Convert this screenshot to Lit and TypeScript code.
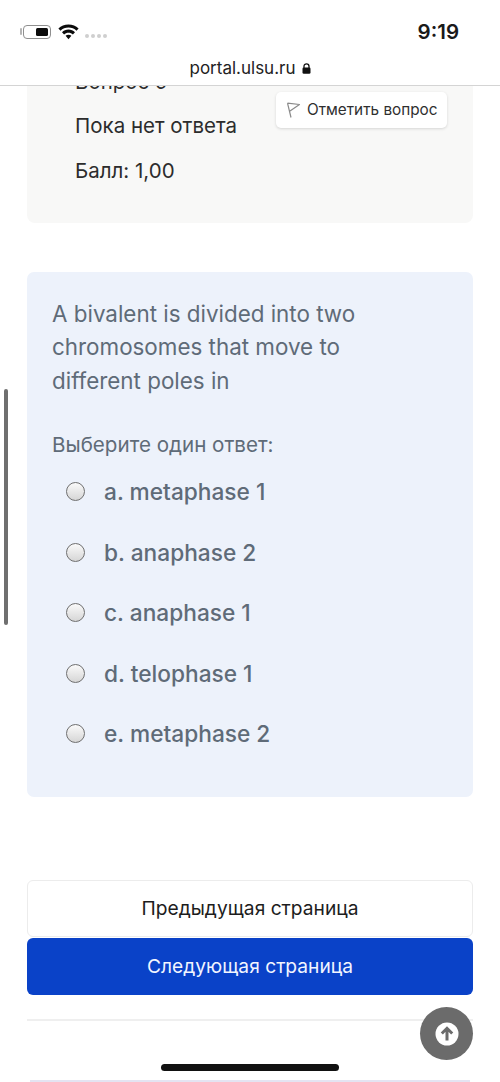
import { LitElement, html, css } from "lit";
import { customElement } from "lit/decorators.js";

const OPTIONS = ["a. metaphase 1", "b. anaphase 2", "c. anaphase 1", "d. telophase 1", "e. metaphase 2"];

@customElement("app-root")
export class AppRoot extends LitElement {
  static styles = css`
    :host { display: block; position: relative; width: 500px; height: 1082px; overflow: hidden; background: #fff; font-family: Inter, "Liberation Sans", sans-serif; }
    .header { position: absolute; inset: 0 0 auto 0; height: 86px; background: #fff; border-bottom: 1px solid #d4d4d4; box-sizing: border-box; z-index: 2; }
    .status { display: flex; align-items: center; padding: 21px 41px 0 20px; height: 21px; }
    .battery { display: flex; align-items: center; gap: 1px; }
    .nub { width: 1.5px; height: 7px; background: #b5b5b5; border-radius: 1px; }
    .cell { width: 28px; height: 14px; border: 1px solid #8f8f8f; border-radius: 4px; box-sizing: border-box; display: flex; justify-content: flex-end; padding: 2px; }
    .cell i { display: block; width: 12px; height: 100%; background: #0c0c0c; border-radius: 1.5px; }
    .wifi { margin-left: 7px; display: block; }
    .dots { display: flex; gap: 2px; margin: 8px 0 0 6px; }
    .dots i { width: 4px; height: 4px; border-radius: 50%; background: #cfcfcf; }
    .time { margin-left: auto; font-size: 20.5px; font-weight: 600; color: #1a1a1a; line-height: 21px; }
    .url { display: flex; justify-content: center; align-items: center; gap: 6px; margin-top: 16px; font-size: 17px; color: #222; line-height: 20px; }
    .page { padding: 62px 27px 0; display: flex; flex-direction: column; }
    .grey { position: relative; height: 161px; background: #f8f8f7; border-radius: 8px; padding: 0 48px; box-sizing: border-box; color: #2c2c2c; font-size: 20.5px; line-height: 24px; }
    .grey p { margin: 0; }
    .grey .q { padding-top: 8px; }
    .grey .s { margin-top: 20px; }
    .grey .m { margin-top: 21px; }
    .flag { position: absolute; left: 249px; top: 30px; width: 171px; height: 36px; background: #fff; border-radius: 5px; box-shadow: 0 1px 3px rgba(0,0,0,.14); display: flex; align-items: center; gap: 6px; padding-left: 10px; box-sizing: border-box; font-size: 15.3px; line-height: 20px; color: #2f2f2f; }
    .blue { margin-top: 49px; height: 525px; background: #edf2fb; border-radius: 7px; padding: 24.5px 25px 0; box-sizing: border-box; color: #5f6b78; }
    .text { font-size: 22.4px; line-height: 33.5px; width: 345px; }
    .prompt { font-size: 20.6px; line-height: 26px; margin-top: 34.5px; }
    .opts { display: flex; flex-direction: column; gap: 34.5px; margin-top: 21px; padding-left: 14px; }
    .opt { display: flex; align-items: center; gap: 19px; height: 26px; font-size: 22.7px; font-weight: 500; color: #5f6b78; }
    .radio { width: 19px; height: 19px; border-radius: 50%; border: 1.5px solid #6f6f6f; box-sizing: border-box; background: linear-gradient(#fafafa, #d6d6d6); flex: none; }
    .btn { height: 57px; display: flex; align-items: center; justify-content: center; border-radius: 6px; box-sizing: border-box; font-size: 19.2px; padding-bottom: 2px; }
    .prev { margin-top: 83px; background: #fff; border: 1px solid #ececec; color: #1d1d1d; }
    .next { margin-top: 1px; background: #0a42c8; color: #f2f5ff; }
    .rule { height: 1.5px; background: #efefef; margin-top: 24px; }
    .bar { position: absolute; left: 4px; top: 389px; width: 4px; height: 236px; background: #6f6f6f; border-radius: 2px; }
    .fab { position: absolute; left: 420px; top: 1007px; width: 53px; height: 53px; border-radius: 50%; background: #6b6b6b; display: flex; align-items: center; justify-content: center; }
    .home { position: absolute; left: 161px; top: 1064px; width: 178px; height: 7px; border-radius: 4px; background: #111; }
    .edge { position: absolute; left: 30px; right: 30px; bottom: 0; height: 2px; background: #e4e4f2; }
  `;

  render() {
    return html`
      <div class="header">
        <div class="status">
          <div class="battery"><span class="nub"></span><div class="cell"><i></i></div></div>
          <svg class="wifi" width="21" height="16" viewBox="0 0 21 16">
            <path d="M10.5 0.5C6.6 0.5 3 2 .4 4.5l2.1 2.2C4.600 4.800 7.400 3.600 10.500 3.600s5.900 1.200 8 3.100l2.100-2.200C18 2 14.400 .5 10.500 .5z" fill="#0c0c0c"/>
            <path d="M10.500 5.600c-2.500 0-4.800 1-6.500 2.600l2.100 2.200c1.200-1.100 2.700-1.700 4.400-1.700s3.200.6 4.400 1.700l2.100-2.200c-1.700-1.600-4-2.600-6.500-2.600z" fill="#0c0c0c"/>
            <path d="M10.500 10.700c-1.100 0-2.100.4-2.900 1.100l2.900 3.400 2.900-3.400c-.8-.7-1.800-1.100-2.900-1.100z" fill="#0c0c0c"/>
          </svg>
          <div class="dots"><i></i><i></i><i></i><i></i></div>
          <div class="time">9:19</div>
        </div>
        <div class="url">
          <span>portal.ulsu.ru</span>
          <svg width="9" height="11" viewBox="0 0 9 11"><path d="M2 5V3.300a2.500 2.500 0 0 1 5 0V5" fill="none" stroke="#111" stroke-width="1.300"/><rect x=".5" y="4.500" width="8" height="6.200" rx="1.300" fill="#111"/></svg>
        </div>
      </div>

      <div class="page">
        <section class="grey">
          <p class="q">Вопрос 9</p>
          <p class="s">Пока нет ответа</p>
          <p class="m">Балл: 1,00</p>
          <div class="flag">
            <svg width="15" height="17" viewBox="0 0 15 17"><path d="M1.500 1.200 5 15.500M1.500 1.200 13.500 2.500 4 9" fill="none" stroke="#8a8a8a" stroke-width="1.200" stroke-linejoin="round"/></svg>
            <span>Отметить вопрос</span>
          </div>
        </section>

        <section class="blue">
          <div class="text">A bivalent is divided into two chromosomes that move to different poles in</div>
          <div class="prompt">Выберите один ответ:</div>
          <div class="opts">
            ${OPTIONS.map((o) => html`<label class="opt"><span class="radio"></span><span>${o}</span></label>`)}
          </div>
        </section>

        <div class="btn prev">Предыдущая страница</div>
        <div class="btn next">Следующая страница</div>
        <div class="rule"></div>
      </div>

      <div class="bar"></div>
      <div class="fab">
        <svg width="24" height="24" viewBox="0 0 24 24"><circle cx="12" cy="12" r="11.500" fill="#fff"/><path d="M12 18.500V6.500M6.800 11.500 12 6.300l5.200 5.200" fill="none" stroke="#6b6b6b" stroke-width="3"/></svg>
      </div>
      <div class="home"></div>
      <div class="edge"></div>
    `;
  }
}
